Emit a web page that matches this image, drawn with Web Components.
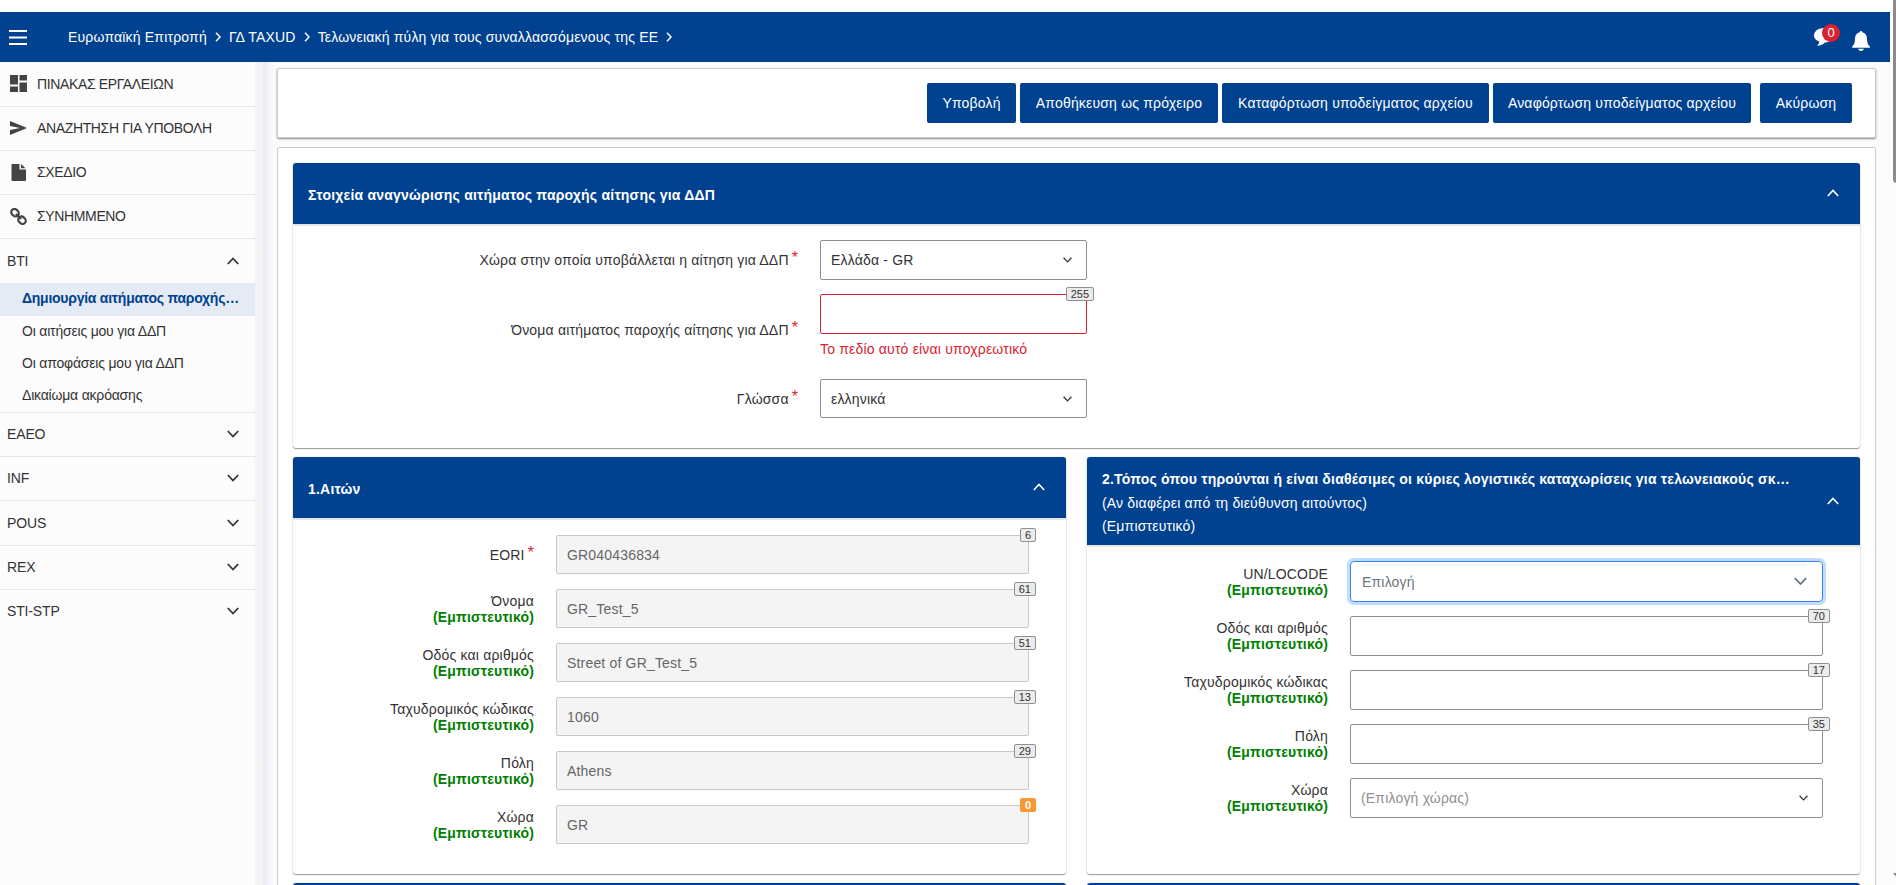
<!DOCTYPE html>
<html lang="el">
<head>
<meta charset="utf-8">
<title>EU Customs Trader Portal</title>
<style>
  html, body {
    margin: 0;
    height: 885px;
    overflow: hidden;
  }

  body {
    background: #fff;
    color: #333;
    font: 14px/16px "Liberation Sans", Arial, sans-serif;
  }
</style>
</head>
<body>
<portal-app>
  <portal-header slot="header"></portal-header>

  <side-menu slot="menu">
    <menu-item icon="dashboard">ΠΙΝΑΚΑΣ ΕΡΓΑΛΕΙΩΝ</menu-item>
    <menu-item icon="send">ΑΝΑΖΗΤΗΣΗ ΓΙΑ ΥΠΟΒΟΛΗ</menu-item>
    <menu-item icon="file">ΣΧΕΔΙΟ</menu-item>
    <menu-item icon="link">ΣΥΝΗΜΜΕΝΟ</menu-item>
    <menu-item arrow="up">BTI
      <sub-item slot="items" active>Δημιουργία αιτήματος παροχής…</sub-item>
      <sub-item slot="items">Οι αιτήσεις μου για ΔΔΠ</sub-item>
      <sub-item slot="items">Οι αποφάσεις μου για ΔΔΠ</sub-item>
      <sub-item slot="items">Δικαίωμα ακρόασης</sub-item>
    </menu-item>
    <menu-item arrow="down">EAEO</menu-item>
    <menu-item arrow="down">INF</menu-item>
    <menu-item arrow="down" tall>POUS</menu-item>
    <menu-item arrow="down">REX</menu-item>
    <menu-item arrow="down" last>STI-STP</menu-item>
  </side-menu>

  <action-bar>
    <action-button style="--w: 89px">Υποβολή</action-button>
    <action-button style="--w: 198px">Αποθήκευση ως πρόχειρο</action-button>
    <action-button style="--w: 267px">Καταφόρτωση υποδείγματος αρχείου</action-button>
    <action-button style="--w: 258px">Αναφόρτωση υποδείγματος αρχείου</action-button>
    <action-button style="--w: 92px; margin-left: 5px">Ακύρωση</action-button>
  </action-bar>

  <form-card>
    <form-panel wide>
      <span slot="title">Στοιχεία αναγνώρισης αιτήματος παροχής αίτησης για ΔΔΠ</span>
      <form-field select required label="Χώρα στην οποία υποβάλλεται η αίτηση για ΔΔΠ" value="Ελλάδα - GR"></form-field>
      <form-field required invalid label="Όνομα αιτήματος παροχής αίτησης για ΔΔΠ" count="255" error="Το πεδίο αυτό είναι υποχρεωτικό"></form-field>
      <form-field select required label="Γλώσσα" value="ελληνικά" style="--h: 39px"></form-field>
    </form-panel>

    <form-panel style="--gap: 15px; --h: 39px; --top: 15px">
      <span slot="title">1.Αιτών</span>
      <form-field disabled required label="EORI" value="GR040436834" count="6"></form-field>
      <form-field disabled confidential label="Όνομα" value="GR_Test_5" count="61"></form-field>
      <form-field disabled confidential label="Οδός και αριθμός" value="Street of GR_Test_5" count="51"></form-field>
      <form-field disabled confidential label="Ταχυδρομικός κώδικας" value="1060" count="13"></form-field>
      <form-field disabled confidential label="Πόλη" value="Athens" count="29"></form-field>
      <form-field disabled confidential label="Χώρα" value="GR" count="0"></form-field>
    </form-panel>

    <form-panel>
      <span slot="title">2.Τόπος όπου τηρούνται ή είναι διαθέσιμες οι κύριες λογιστικές καταχωρίσεις για τελωνειακούς σκ…</span>
      <span slot="subtitle">(Αν διαφέρει από τη διεύθυνση αιτούντος)</span>
      <span slot="subtitle">(Εμπιστευτικό)</span>
      <form-field select focused confidential label="UN/LOCODE" value="Επιλογή" style="--h: 41px"></form-field>
      <form-field confidential label="Οδός και αριθμός" count="70"></form-field>
      <form-field confidential label="Ταχυδρομικός κώδικας" count="17"></form-field>
      <form-field confidential label="Πόλη" count="35"></form-field>
      <form-field select placeholder confidential label="Χώρα" value="(Επιλογή χώρας)"></form-field>
    </form-panel>

    <form-panel></form-panel>
    <form-panel></form-panel>
  </form-card>
</portal-app>

<script>
const icons = {
  dashboard: '<svg width="17" height="17" viewBox="0 0 17 17"><path fill="#444" d="M0 0h8v9.500H0zM9.500 0H17v5.500H9.500zM0 11.500h8V17H0zM9.500 7.500H17V17H9.500z"/></svg>',
  send: '<svg width="17" height="14" viewBox="0 0 17 14"><path fill="#444" d="M0 0l17 7L0 14V9l10-2L0 5z"/></svg>',
  file: '<svg width="17" height="17" viewBox="0 0 17 17"><path fill="#444" d="M2 0h7.500v5.500H16V16a1 1 0 0 1-1 1H2.500a1 1 0 0 1-1-1V.5zM11 0l4.500 4.200H11z"/></svg>',
  link: '<svg width="17" height="17" viewBox="0 0 17 17"><g fill="none" stroke="#444" stroke-width="2.200"><rect x="1" y="1.500" width="8" height="6.400" rx="3.200" transform="rotate(45 5 4.700)"/><rect x="8" y="9" width="8" height="6.400" rx="3.200" transform="rotate(45 12 12.200)"/><path d="M6 6l5 5"/></g></svg>',
};

const chevron = (dir, size = 12, color = '#333', weight = 1.8) => `
  <svg width="${size}" height="${size * 8 / 12}" viewBox="0 0 12 8">
    <path d="${dir === 'up' ? 'M.8 7L6 1.500L11.200 7' : 'M.8 1L6 6.500L11.200 1'}" fill="none" stroke="${color}" stroke-width="${weight}"/>
  </svg>`;

class BaseElement extends HTMLElement {
  constructor() {
    super();
    this.attachShadow({mode: 'open'});
  }

  connectedCallback() {
    this.shadowRoot.innerHTML = this.render();
  }
}

class PortalApp extends BaseElement {
  render() {
    return `
      <style>
        :host {
          display: block;
          position: relative;
          height: 885px;
          padding-top: 12px;
          box-sizing: border-box;
          overflow: hidden;
        }

        .layout {
          display: flex;
          height: 823px;
          background: #fbfbfc;
        }

        main {
          flex: 1;
          display: flex;
          flex-direction: column;
          gap: 9px;
          padding: 6px 20px 0 14px;
          background: linear-gradient(to right, #e9ebf3, #f8f9fc 9px, #fbfbfc 14px);
          letter-spacing: .18px;
        }

        .thumb {
          position: absolute;
          top: -6px;
          left: 1893px;
          width: 9px;
          height: 189px;
          border-radius: 4px;
          background: #8b8b8b;
        }

        .scroll-end {
          position: absolute;
          left: 1893px;
          top: 873px;
          border: 5px solid transparent;
          border-top: 6px solid #888;
          border-bottom: 0;
        }
      </style>
      <slot name="header"></slot>
      <div class="layout">
        <slot name="menu"></slot>
        <main><slot></slot></main>
      </div>
      <div class="thumb"></div>
      <div class="scroll-end"></div>
    `;
  }
}

class PortalHeader extends BaseElement {
  render() {
    const sep = `<svg class="sep" width="6" height="10" viewBox="0 0 6 10"><path d="M1 .8L5 5L1 9.200" fill="none" stroke="#fff" stroke-width="1.500"/></svg>`;
    return `
      <style>
        :host {
          display: flex;
          align-items: center;
          box-sizing: border-box;
          width: 1890px;
          height: 50px;
          padding: 0 20px 0 9px;
          background: #004190;
          color: #fff;
        }

        .burger {
          margin-right: 41px;
        }

        nav {
          display: flex;
          align-items: center;
          flex: 1;
          letter-spacing: .18px;
        }

        .sep {
          margin: 0 8px;
        }

        .chat {
          position: relative;
          width: 26px;
          height: 26px;
          margin-right: 12px;
        }

        .chat svg {
          position: absolute;
          left: 0;
          top: 4px;
        }

        .badge {
          position: absolute;
          left: 8px;
          top: 0;
          width: 18px;
          height: 18px;
          border-radius: 50%;
          background: #da2131;
          font-size: 13px;
          line-height: 17px;
          text-align: center;
        }

        .bell {
          margin-top: 8px;
        }
      </style>
      <svg class="burger" width="18" height="15" viewBox="0 0 18 15"><path fill="#fff" d="M0 0h18v2H0zM0 6.500h18v2H0zM0 13h18v2H0z"/></svg>
      <nav>
        <span>Ευρωπαϊκή Επιτροπή</span>${sep}<span>ΓΔ TAXUD</span>${sep}<span>Τελωνειακή πύλη για τους συναλλασσόμενους της ΕΕ</span>${sep}
      </nav>
      <div class="chat">
        <svg width="20" height="18" viewBox="0 0 20 18"><path fill="#fff" d="M10 0c5.500 0 9.500 3 9.500 7s-4 7.500-8.500 7.500c-1.500 2-4.500 3.200-8 3.200 1.500-1.200 2.200-2.700 2.200-4.200C2 12.500 0 10.300 0 7.500 0 3 4.500 0 10 0z"/></svg>
        <span class="badge">0</span>
      </div>
      <svg class="bell" width="18" height="20" viewBox="0 0 19 21" preserveAspectRatio="none"><path fill="#fff" d="M9.500 0c.8 0 1.200.5 1.300 1.300C14 2 15.800 4.500 15.800 8c0 4.500 1 6.500 3 8.300v1.200H.2v-1.200c2-1.800 3-3.800 3-8.300 0-3.500 1.800-6 5-6.700C8.300.5 8.700 0 9.500 0zM6.500 18.700h6c-.3 1.400-1.500 2.200-3 2.200s-2.700-.8-3-2.200z"/></svg>
    `;
  }
}

class SideMenu extends BaseElement {
  render() {
    return `
      <style>
        :host {
          display: block;
          flex: none;
          width: 255px;
          border-right: 8px solid #f4f4f4;
          background: #fcfcfc;
        }
      </style>
      <slot></slot>
    `;
  }
}

class MenuItem extends BaseElement {
  render() {
    const icon = this.getAttribute('icon');
    const arrow = this.getAttribute('arrow');
    return `
      <style>
        :host {
          display: block;
          border-bottom: 1px solid #e6e6e6;
          letter-spacing: -.15px;
        }

        :host([icon]) {
          letter-spacing: -.36px;
        }

        :host([last]) {
          border-bottom: 0;
        }

        .row {
          display: flex;
          align-items: center;
          box-sizing: border-box;
          height: 43px;
          padding: 0 16px 1px ${icon ? 10 : 7}px;
        }

        :host([icon="dashboard"]) .row,
        :host([arrow="up"]) .row,
        :host([tall]) .row {
          height: 44px;
        }

        .icon {
          display: flex;
          width: 27px;
        }

        .text {
          flex: 1;
        }
      </style>
      <div class="row">
        ${icon ? `<span class="icon">${icons[icon]}</span>` : ''}
        <span class="text"><slot></slot></span>
        ${arrow ? chevron(arrow) : ''}
      </div>
      <slot name="items"></slot>
    `;
  }
}

class SubItem extends BaseElement {
  render() {
    return `
      <style>
        :host {
          display: block;
          height: 32px;
          padding-left: 22px;
          line-height: 31px;
          letter-spacing: -.2px;
        }

        :host([active]) {
          height: 33px;
          background: #e4ebf4;
          color: #004190;
          font-weight: bold;
          letter-spacing: -.25px;
        }
      </style>
      <slot></slot>
    `;
  }
}

class ActionBar extends BaseElement {
  render() {
    return `
      <style>
        :host {
          display: flex;
          align-items: center;
          justify-content: flex-end;
          gap: 4px;
          box-sizing: border-box;
          height: 70px;
          flex: none;
          padding-right: 23px;
          border: 1px solid #ccc;
          border-radius: 2px;
          background: #fff;
          box-shadow: 0 1px 2px #888;
        }
      </style>
      <slot></slot>
    `;
  }
}

class ActionButton extends BaseElement {
  render() {
    return `
      <style>
        :host {
          display: block;
          width: var(--w);
          height: 40px;
          border-radius: 2px;
          background: #004190;
          color: #fff;
          line-height: 40px;
          text-align: center;
          white-space: nowrap;
        }
      </style>
      <slot></slot>
    `;
  }
}

class FormCard extends BaseElement {
  render() {
    return `
      <style>
        :host {
          display: grid;
          grid-template-columns: 773px 773px;
          align-content: start;
          gap: 9px 21px;
          flex: 1;
          padding: 15px;
          border: 1px solid #ccc;
          border-radius: 2px;
          background: #fff;
        }
      </style>
      <slot></slot>
    `;
  }
}

class FormPanel extends BaseElement {
  render() {
    return `
      <style>
        :host {
          display: block;
          border-radius: 3px;
          background: #fff;
          box-shadow: 0 1px 1px #999, 0 0 2px #ccc;
        }

        :host([wide]) {
          grid-column: 1 / -1;
        }

        header {
          display: flex;
          align-items: center;
          box-sizing: border-box;
          min-height: 61px;
          padding: 11px 21px 6.500px 15px;
          border-radius: 3px 3px 0 0;
          background: #004190;
          color: #fff;
          line-height: 23.500px;
        }

        header svg {
          margin-bottom: 5px;
        }

        .text {
          display: flex;
          flex-direction: column;
          flex: 1;
          white-space: nowrap;
        }

        ::slotted([slot="title"]) {
          font-weight: bold;
          letter-spacing: .21px;
        }

        .body {
          display: flex;
          flex-direction: column;
          gap: var(--gap, 14px);
          padding: var(--top, 14px) 0 30px;
          border-top: 2px solid #e6e6e6;
        }
      </style>
      <header>
        <div class="text"><slot name="title"></slot><slot name="subtitle"></slot></div>
        ${chevron('up', 12, '#fff', 1.6)}
      </header>
      <div class="body"><slot></slot></div>
    `;
  }
}

class FormField extends BaseElement {
  render() {
    const wide = this.parentElement.hasAttribute('wide');
    const count = this.getAttribute('count');
    const focused = this.hasAttribute('focused');
    return `
      <style>
        :host {
          display: flex;
          align-items: center;
          gap: 22px;
        }

        .label {
          width: ${wide ? 505 : 241}px;
          text-align: right;
        }

        .star {
          position: relative;
          top: -2px;
          color: #da2131;
          font-size: 16px;
          line-height: 0;
          letter-spacing: 0;
          margin-left: -1px;
        }

        .confidential {
          display: block;
          color: #008000;
          font-weight: bold;
        }

        .control {
          width: ${wide ? 267 : 473}px;
        }

        .input {
          display: flex;
          align-items: center;
          justify-content: space-between;
          position: relative;
          box-sizing: border-box;
          height: var(--h, 40px);
          padding: 0 14px 0 10px;
          border: 1px solid #8f8f8f;
          border-radius: 2px;
        }

        :host([disabled]) .input {
          border-color: #c8c8c8;
          background: #f4f4f4;
          color: #666;
        }

        :host([invalid]) .input {
          border-color: #da2131;
        }

        :host([placeholder]) .input span {
          color: #8f8f8f;
        }

        :host([focused]) .input {
          border-color: #3b82f6;
          border-radius: 4px;
          box-shadow: 0 0 0 3px #bfdbfe;
          color: #6c757d;
          padding-left: 11px;
          padding-right: 15px;
        }

        .input .count {
          position: absolute;
          top: -8px;
          right: -8px;
          height: 12px;
          padding: 0 4px;
          border: 1px solid #8f8f8f;
          border-radius: 2px;
          background: #ebebeb;
          color: #333;
          font-size: 11px;
          line-height: 13px;
          letter-spacing: 0;
        }

        :host([count="0"]) .count {
          border-color: #f79833;
          background: #f79833;
          color: #fff;
          font-weight: bold;
        }

        .error {
          height: 31px;
          padding-top: 6px;
          box-sizing: border-box;
          color: #da2131;
          line-height: 18px;
          white-space: nowrap;
        }
      </style>
      <div class="label">
        ${this.getAttribute('label')}${this.hasAttribute('required') ? ' <span class="star">*</span>' : ''}
        ${this.hasAttribute('confidential') ? '<span class="confidential">(Εμπιστευτικό)</span>' : ''}
      </div>
      <div class="control">
        <div class="input">
          <span>${this.getAttribute('value') || ''}</span>
          ${this.hasAttribute('select') ? chevron('down', focused ? 13 : 9, focused ? '#6c757d' : '#333', 1.7) : ''}
          ${count ? `<span class="count">${count}</span>` : ''}
        </div>
        ${this.hasAttribute('error') ? `<div class="error">${this.getAttribute('error')}</div>` : ''}
      </div>
    `;
  }
}

customElements.define('portal-app', PortalApp);
customElements.define('portal-header', PortalHeader);
customElements.define('side-menu', SideMenu);
customElements.define('menu-item', MenuItem);
customElements.define('sub-item', SubItem);
customElements.define('action-bar', ActionBar);
customElements.define('action-button', ActionButton);
customElements.define('form-card', FormCard);
customElements.define('form-panel', FormPanel);
customElements.define('form-field', FormField);
</script>
</body>
</html>
